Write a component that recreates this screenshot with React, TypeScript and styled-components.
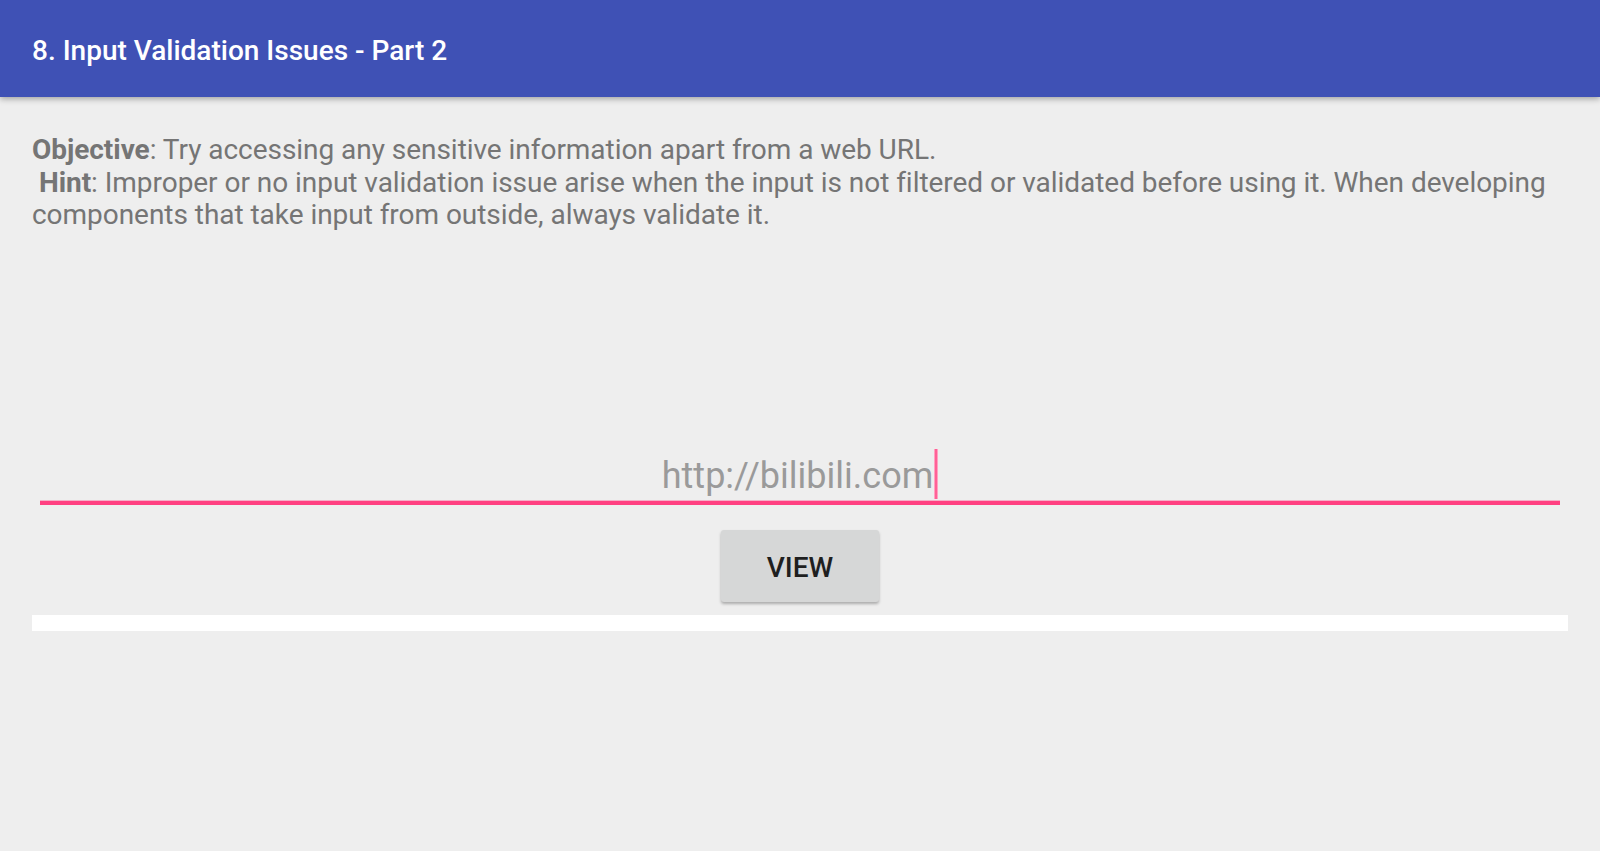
import React from 'react'
import styled, { createGlobalStyle } from 'styled-components'

const GlobalStyle = createGlobalStyle`
  html, body {
    margin: 0;
    padding: 0;
    background: #eeeeee;
    font-family: Roboto, 'Noto Sans', sans-serif;
  }
`

const Screen = styled.div`
  width: 1600px;
  height: 851px;
  background: #eeeeee;
  display: flex;
  flex-direction: column;
  overflow: hidden;
`

const AppBar = styled.header`
  height: 97px;
  flex-shrink: 0;
  display: flex;
  align-items: center;
  padding: 0 32px;
  background: #3f51b5;
  box-shadow: 0 2px 6px rgba(0, 0, 0, 0.32);
  position: relative;
  z-index: 1;
`

const Title = styled.h1`
  margin: 0;
  padding-top: 4px;
  color: #ffffff;
  font-size: 28px;
  font-weight: 500;
`

const Content = styled.main`
  display: flex;
  flex-direction: column;
  padding: 37px 32px 0;
`

const Description = styled.p`
  margin: 0;
  color: #757575;
  font-size: 28px;
  line-height: 32.5px;
  letter-spacing: -0.04px;

  b {
    font-weight: 700;
  }
`

const Field = styled.div`
  margin: 220px 8px 0;
  padding-bottom: 1px;
  border-bottom: 4px solid #ff4081;
  text-align: center;
  font-size: 36px;
  line-height: 48px;
  color: #9a9a9a;
  position: relative;

  &::after {
    content: '';
    position: absolute;
    left: 0;
    right: 0;
    bottom: 0;
    height: 1px;
    background: rgba(255, 64, 129, 0.35);
  }
`

const Caret = styled.span`
  display: inline-block;
  width: 4px;
  height: 50px;
  margin: -3px 0 0 1px;
  vertical-align: top;
  background: linear-gradient(90deg, #ffc2d6, #ff4081 50%, #ffc2d6);
`

const Actions = styled.div`
  display: flex;
  justify-content: center;
  margin-top: 25px;
`

const Button = styled.button`
  width: 158px;
  height: 72px;
  padding: 4px 0 0;
  border: none;
  border-radius: 3px;
  background: #d6d7d7;
  box-shadow: 0 2px 3px rgba(0, 0, 0, 0.28);
  color: #1f1f1f;
  font-family: Roboto, sans-serif;
  font-size: 28px;
  font-weight: 500;
  cursor: pointer;
`

const WebView = styled.div`
  margin-top: 13px;
  height: 16px;
  background: #ffffff;
`

export default function App() {
  return (
    <Screen>
      <GlobalStyle />
      <AppBar>
        <Title>8. Input Validation Issues - Part 2</Title>
      </AppBar>
      <Content>
        <Description>
          <b>Objective</b>: Try accessing any sensitive information apart from a web URL.
          <br />
          &nbsp;<b>Hint</b>: Improper or no input validation issue arise when the input is not filtered or
          validated before using it. When developing components that take input from outside, always
          validate it.
        </Description>
        <Field>
          http://bilibili.com
          <Caret />
        </Field>
        <Actions>
          <Button>VIEW</Button>
        </Actions>
        <WebView />
      </Content>
    </Screen>
  )
}
